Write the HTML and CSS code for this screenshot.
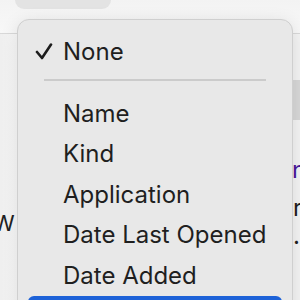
FILE: index.html
```html
<!DOCTYPE html>
<html lang="en">
  <head>
    <meta charset="UTF-8" />
    <title>Sort By</title>
    <link rel="stylesheet" href="styles.css">
  </head>
  <body>
    <!-- Window behind the menu -->
    <div class="window">
      <div class="toolbar">
        <div class="toolbar-pill"></div>
      </div>
      <div class="window-body">
        <div class="pane-left">
          <span class="peek-w">W</span>
        </div>
        <div class="pane-right">
          <div class="pane-band"></div>
          <span class="peek-n">n</span>
          <span class="peek-r">r</span>
          <span class="peek-dot">.</span>
        </div>
      </div>
    </div>

    <!-- Sort menu -->
    <div class="menu">
      <div class="menu-item checked">
        <svg class="check" viewBox="0 0 18 17" width="18" height="17">
          <path d="M2 9 L7 15 L16 1.5" fill="none" stroke="#1d1d1d" stroke-width="2.6" stroke-linecap="round" stroke-linejoin="round" />
        </svg>
        <span>None</span>
      </div>
      <div class="menu-separator"></div>
      <div class="menu-item">Name</div>
      <div class="menu-item">Kind</div>
      <div class="menu-item">Application</div>
      <div class="menu-item">Date Last Opened</div>
      <div class="menu-item">Date Added</div>
      <div class="menu-item active">Date Modified</div>
    </div>
  </body>
</html>
```

FILE: styles.css
```css
* {
  margin: 0;
  padding: 0;
  box-sizing: border-box;
}

body {
  width: 300px;
  height: 300px;
  overflow: hidden;
  position: relative;
  font-family: Inter, "Noto Sans", sans-serif;
  background: #f6f6f6;
}

.window {
  height: 100%;
  display: flex;
  flex-direction: column;
}

.toolbar {
  height: 34px;
  border-bottom: 1px solid #d9d9d9;
  background: linear-gradient(180deg, #f3f3f3, #f8f8f8);
}

.toolbar-pill {
  margin-left: 15px;
  width: 96px;
  height: 9px;
  background: #e3e3e3;
  border-radius: 0 0 9px 9px;
}

.window-body {
  flex: 1;
  display: flex;
}

.pane-left {
  flex: 1;
  background: linear-gradient(90deg, #efefef, #fafafa 20px);
  padding-top: 176px;
}

.peek-w {
  display: block;
  margin-left: -7px;
  font-size: 22px;
  color: #222;
}

.pane-right {
  width: 8px;
  border-left: 1px solid #c9c9c9;
  background: #f4f4f4;
  overflow: hidden;
  padding-top: 46px;
}

.pane-band {
  height: 40px;
  background: #d8d8d8;
}

.peek-n,
.peek-r,
.peek-dot {
  display: block;
  font-size: 24px;
  line-height: 1;
}

.peek-n {
  margin-top: 38px;
  margin-left: -1px;
  color: #4a1a9c;
}

.peek-r {
  margin-top: 14px;
  color: #1f1f1f;
}

.peek-dot {
  margin-top: 4px;
  color: #1f1f1f;
}

/* The popup menu sits over the window */
.menu {
  position: absolute;
  left: 17px;
  top: 19px;
  width: 276px;
  height: 320px;
  background: #e8e8e8;
  border: 1px solid #cfcfcf;
  border-radius: 12px;
  box-shadow: 0 4px 18px rgba(0, 0, 0, 0.12);
  padding: 11px 10px 0;
}

.menu-item {
  height: 40.5px;
  display: flex;
  align-items: center;
  padding-left: 35px;
  font-size: 24px;
  color: #1f1f1f;
  border-radius: 6px;
}

.menu-item.checked {
  height: 40px;
  padding-left: 7px;
  gap: 10px;
}

.menu-separator {
  height: 2px;
  margin: 8px 16px 12px;
  background: #cbcbcb;
}

.menu-item.active {
  background: #1d62d8;
  color: #fff;
}
```
